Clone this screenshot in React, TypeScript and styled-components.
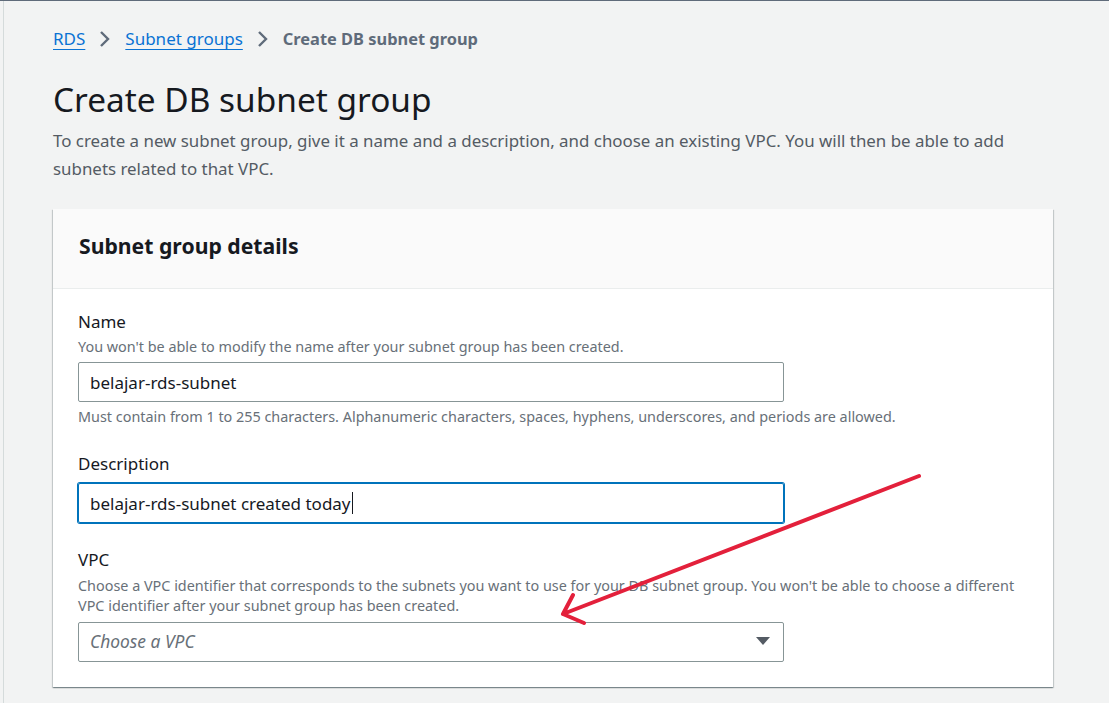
import * as React from "react";
import styled, { createGlobalStyle } from "styled-components";

const GlobalStyle = createGlobalStyle`
  html, body {
    margin: 0;
    padding: 0;
    background: #f2f3f3;
    font-family: "Noto Sans", "Open Sans", sans-serif;
    color: #16191f;
  }
`;

const Page = styled.div`
  position: relative;
  min-height: 703px;
  border-top: 1px solid #5f6b7a;
  box-sizing: border-box;
  padding-left: 3px;
  overflow: hidden;
`;

const Main = styled.main`
  border-left: 1px solid #d5dbdb;
  min-height: 702px;
  padding: 21px 0 0 49px;
  box-sizing: border-box;
`;

const Breadcrumbs = styled.nav`
  display: flex;
  align-items: center;
  gap: 14px;
  font-size: 17px;
  line-height: 34px;
`;

const Crumb = styled.a`
  color: #0972d3;
  text-decoration: underline;
  text-underline-offset: 4px;
  text-decoration-thickness: 1px;
`;

const Current = styled.span`
  color: #5f6b7a;
  font-weight: 700;
  font-size: 16.4px;
`;

const Chevron = styled.svg`
  width: 12px;
  height: 18px;
`;

const Title = styled.h1`
  margin: 23px 0 0;
  font-size: 33.4px;
  font-weight: 400;
  line-height: 40px;
  color: #16191f;
`;

const Intro = styled.p`
  margin: 8px 0 0;
  width: 980px;
  font-size: 16.9px;
  line-height: 28px;
  color: #545b64;
`;

const Card = styled.section`
  margin-top: 26px;
  width: 1000px;
  background: #fff;
  box-shadow: 0 1px 1px 0 rgba(0, 28, 36, 0.3), 1px 1px 1px 0 rgba(0, 28, 36, 0.15),
    -1px 1px 1px 0 rgba(0, 28, 36, 0.15);
`;

const CardHeader = styled.header`
  height: 80px;
  box-sizing: border-box;
  background: #fafafa;
  border-bottom: 1px solid #eaeded;
  display: flex;
  align-items: center;
  padding: 0 26px 7px;
  font-size: 21.2px;
  font-weight: 700;
`;

const CardBody = styled.div`
  padding: 20px 25px 25px;
  display: flex;
  flex-direction: column;
  gap: 24px;
`;

const Field = styled.div`
  display: flex;
  flex-direction: column;
`;

const Label = styled.label`
  font-size: 17px;
  line-height: 26px;
  color: #16191f;
`;

const Hint = styled.div<{ $gap?: number }>`
  margin-top: ${(p) => p.$gap ?? 2}px;
  font-size: 14.4px;
  line-height: 20px;
  color: #687078;
  max-width: 950px;
`;

const Input = styled.div<{ $focused?: boolean }>`
  margin-top: 5px;
  width: 706px;
  height: 40px;
  box-sizing: border-box;
  border: 1px solid #879596;
  border-radius: 2px;
  padding: 0 11px;
  display: flex;
  align-items: center;
  font-size: 17px;
  color: #16191f;
  ${(p) =>
    p.$focused &&
    `
    margin-top: 6px;
    border-color: #0073bb;
    box-shadow: 0 0 0 1px #0073bb;
  `}
`;

const Caret = styled.span`
  display: inline-block;
  width: 1px;
  height: 22px;
  background: #16191f;
  margin-left: 1px;
`;

const SelectBox = styled(Input)`
  margin-top: 6px;
  justify-content: space-between;
  padding-right: 13px;
  padding-bottom: 2px;
`;

const Placeholder = styled.span`
  color: #687078;
  font-style: italic;
  font-size: 17.4px;
`;

const Arrow = styled.svg`
  position: absolute;
  left: 0;
  top: 0;
  pointer-events: none;
`;

const ChevronIcon = () => (
  <Chevron viewBox="0 0 12 18">
    <path d="M2 2l7 7-7 7" fill="none" stroke="#5f6b7a" strokeWidth="2.4" />
  </Chevron>
);

export default function App() {
  return (
    <>
      <GlobalStyle />
      <Page>
        <Main>
          <Breadcrumbs>
            <Crumb>RDS</Crumb>
            <ChevronIcon />
            <Crumb>Subnet groups</Crumb>
            <ChevronIcon />
            <Current>Create DB subnet group</Current>
          </Breadcrumbs>
          <Title>Create DB subnet group</Title>
          <Intro>
            To create a new subnet group, give it a name and a description, and
            choose an existing VPC. You will then be able to add subnets related to
            that VPC.
          </Intro>
          <Card>
            <CardHeader>Subnet group details</CardHeader>
            <CardBody>
              <Field>
                <Label>Name</Label>
                <Hint>
                  You won't be able to modify the name after your subnet group has
                  been created.
                </Hint>
                <Input>belajar-rds-subnet</Input>
                <Hint $gap={5}>
                  Must contain from 1 to 255 characters. Alphanumeric characters,
                  spaces, hyphens, underscores, and periods are allowed.
                </Hint>
              </Field>
              <Field>
                <Label>Description</Label>
                <Input $focused>
                  belajar-rds-subnet created today
                  <Caret />
                </Input>
              </Field>
              <Field>
                <Label>VPC</Label>
                <Hint $gap={3}>
                  Choose a VPC identifier that corresponds to the subnets you want to
                  use for your DB subnet group. You won't be able to choose a
                  different VPC identifier after your subnet group has been created.
                </Hint>
                <SelectBox>
                  <Placeholder>Choose a VPC</Placeholder>
                  <svg width="14" height="10" viewBox="0 0 14 10">
                    <path d="M0 1h14L7 9z" fill="#545b64" />
                  </svg>
                </SelectBox>
              </Field>
            </CardBody>
          </Card>
        </Main>
        <Arrow width="1109" height="703" viewBox="0 0 1109 703">
          <path
            d="M919 475L563 613M563 613L573 594M563 613L584 622"
            fill="none"
            stroke="#e3203b"
            strokeWidth="4"
            strokeLinecap="round"
            strokeLinejoin="round"
          />
        </Arrow>
      </Page>
    </>
  );
}
